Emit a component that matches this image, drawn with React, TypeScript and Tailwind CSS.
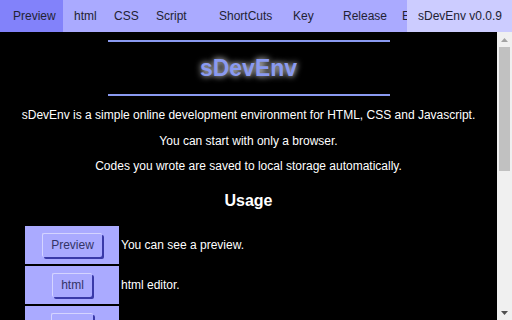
const NAV_ITEMS = [
  { label: 'html', w: 'w-[40px]' },
  { label: 'CSS', w: 'w-[42px]' },
  { label: 'Script', w: 'w-[63px]' },
  { label: 'ShortCuts', w: 'w-[74px]' },
  { label: 'Key', w: 'w-[50px]' },
  { label: 'Release', w: 'w-[59px]' },
  { label: 'Edit', w: 'w-[60px]' },
]

const USAGE = [
  { button: 'Preview', text: 'You can see a preview.' },
  { button: 'html', text: 'html editor.' },
  { button: 'CSS', text: 'CSS editor.' },
  { button: 'Script', text: 'Javascript editor.' },
  { button: 'ShortCuts', text: 'Shortcut keys.' },
  { button: 'Key', text: 'Key bindings.' },
  { button: 'Release', text: 'Release notes.' },
]

function UsageButton({ label }: { label: string }) {
  return (
    <span className="inline-block rounded-[2px] border-t border-l border-[#d4d4ff] bg-[#aaaaff] px-[8px] py-[3px] text-[12px] leading-[17px] text-[#333366] shadow-[2px_2px_0_#3a3aa8]">
      {label}
    </span>
  )
}

function ScrollBar() {
  return (
    <div className="flex w-[15px] flex-none flex-col bg-[#f0f0f0]">
      <div className="flex h-[15px] items-center justify-center">
        <svg width="7" height="4" viewBox="0 0 7 4">
          <path d="M0 4 L3.5 0 L7 4 Z" fill="#a3a3a3" />
        </svg>
      </div>
      <div className="mx-[2px] h-[124px] bg-[#c1c1c1]" />
      <div className="flex-1" />
      <div className="flex h-[15px] items-center justify-center">
        <svg width="7" height="4" viewBox="0 0 7 4">
          <path d="M0 0 L3.5 4 L7 0 Z" fill="#505050" />
        </svg>
      </div>
    </div>
  )
}

export default function App() {
  return (
    <div className="flex h-[320px] w-[512px] flex-col overflow-hidden bg-black font-['Liberation_Sans',sans-serif]">
      <nav className="flex h-8 flex-none bg-[#aaaaff] text-[12px] text-[#222233]">
        <div className="flex min-w-0 flex-1 overflow-hidden">
          <span className="flex w-[63px] flex-none items-center bg-[#8282fa] pl-[13px]">Preview</span>
          {NAV_ITEMS.map((item) => (
            <span key={item.label} className={`flex flex-none items-center pl-[11px] ${item.w}`}>
              {item.label}
            </span>
          ))}
        </div>
        <span className="flex w-[105px] flex-none items-center bg-[#ccccff] pl-[11px]">sDevEnv v0.0.9</span>
      </nav>

      <div className="flex min-h-0 flex-1">
        <main className="min-w-0 flex-1 overflow-hidden text-center text-[12px] leading-[15px] text-white">
          <div className="mx-auto mt-2 h-[2px] w-[282px] bg-[#8a9af0]" />
          <h1 className="flex h-[52px] items-center justify-center text-[23px] font-bold text-[#8a9af0] [text-shadow:0_0_6px_#ffffff]">
            sDevEnv
          </h1>
          <div className="mx-auto h-[2px] w-[282px] bg-[#8a9af0]" />

          <p className="mt-[12px]">sDevEnv is a simple online development environment for HTML, CSS and Javascript.</p>
          <p className="mt-[11px]">You can start with only a browser.</p>
          <p className="mt-[10px]">Codes you wrote are saved to local storage automatically.</p>

          <h2 className="mt-[17px] text-[16px] font-bold leading-[20px]">Usage</h2>

          <div className="mt-[15px] flex flex-col gap-[2px] pb-8 pl-[25px] text-left">
            {USAGE.map((row) => (
              <div key={row.button} className="flex items-center">
                <div className="flex h-[38px] w-[94px] flex-none items-center justify-center bg-[#aaaaff]">
                  <UsageButton label={row.button} />
                </div>
                <span className="pl-[2px]">{row.text}</span>
              </div>
            ))}
          </div>
        </main>
        <ScrollBar />
      </div>
    </div>
  )
}
